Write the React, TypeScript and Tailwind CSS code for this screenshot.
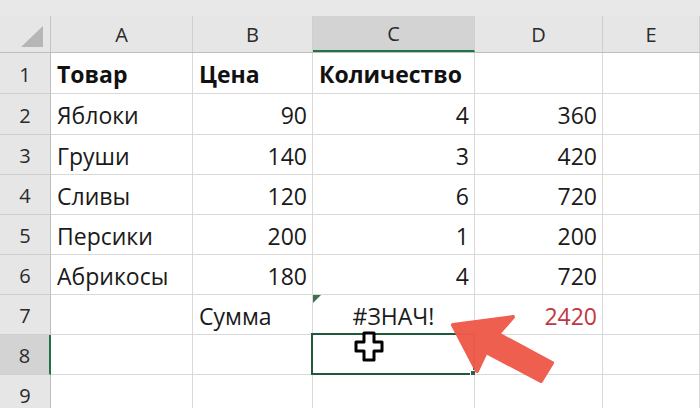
import React from "react";

const colWidths = ["w-[142px]", "w-[120px]", "w-[162px]", "w-[128px]", "flex-1"];
const colNames = ["A", "B", "C", "D", "E"];

type Cell = { v?: string; align?: "l" | "r" | "c"; bold?: boolean; red?: boolean };

const rows: Cell[][] = [
  [{ v: "Товар", bold: true }, { v: "Цена", bold: true }, { v: "Количество", bold: true }, {}, {}],
  [{ v: "Яблоки" }, { v: "90", align: "r" }, { v: "4", align: "r" }, { v: "360", align: "r" }, {}],
  [{ v: "Груши" }, { v: "140", align: "r" }, { v: "3", align: "r" }, { v: "420", align: "r" }, {}],
  [{ v: "Сливы" }, { v: "120", align: "r" }, { v: "6", align: "r" }, { v: "720", align: "r" }, {}],
  [{ v: "Персики" }, { v: "200", align: "r" }, { v: "1", align: "r" }, { v: "200", align: "r" }, {}],
  [{ v: "Абрикосы" }, { v: "180", align: "r" }, { v: "4", align: "r" }, { v: "720", align: "r" }, {}],
  [{}, { v: "Сумма" }, { v: "#ЗНАЧ!", align: "c" }, { v: "2420", align: "r", red: true }, {}],
  [{}, {}, {}, {}, {}],
  [{}, {}, {}, {}, {}],
];

const rowHeights = ["h-[41px]", "h-[41px]", "h-[40px]", "h-[40px]", "h-[40px]", "h-[40px]", "h-[40px]", "h-[40px]", "h-[40px]"];

function GridCell({ cell, width, row, col }: { cell: Cell; width: string; row: number; col: number }) {
  const align =
    cell.align === "r" ? "justify-end pr-[5px]" : cell.align === "c" ? "justify-center" : "justify-start pl-[6px]";
  const selected = row === 7 && col === 2;
  const errorMark = row === 6 && col === 2;
  return (
    <div
      className={`relative ${width} h-full shrink-0 flex items-center pt-[3px] border-r border-b border-[#d9d9d9] bg-white ${align}`}
    >
      {cell.v && (
        <span
          className={`whitespace-nowrap text-[23px] leading-none ${cell.bold ? "font-bold text-[#111]" : "text-[#1a1a1a]"} ${
            cell.red ? "text-[#bf3840] font-medium" : ""
          }`}
        >
          {cell.v}
        </span>
      )}
      {errorMark && (
        <div className="absolute left-0 top-0 w-0 h-0 border-t-[8px] border-r-[8px] border-t-[#3f6e50] border-r-transparent" />
      )}
      {selected && (
        <div className="absolute -left-[2px] -top-[2px] -right-[1px] -bottom-[1px] border-2 border-[#1f5a3c]">
          <div className="absolute -right-[5px] -bottom-[5px] w-[8px] h-[8px] bg-[#2f6149] border border-white" />
        </div>
      )}
    </div>
  );
}

export default function App() {
  return (
    <div
      className="relative w-[700px] h-[408px] overflow-hidden bg-white"
      style={{ fontFamily: '"Open Sans", "Noto Sans", sans-serif' }}
    >
      <div className="h-[16px] bg-[#e8e8e8]" />

      {/* column headers */}
      <div className="flex h-[37px] bg-[#e6e6e6] border-b border-[#bdbdbd]">
        <div className="relative w-[51px] shrink-0 border-r border-[#c4c4c4]">
          <svg className="absolute left-0 top-0" width="51" height="37" viewBox="0 0 51 37">
            <polygon points="21,31 43,31 43,10" fill="#b6b6b6" />
          </svg>
        </div>
        {colNames.map((c, i) => (
          <div
            key={c}
            className={`${colWidths[i]} shrink-0 flex items-center justify-center pt-[2px] border-r border-[#cfcfcf] text-[20px] text-[#2a2a2a] ${
              c === "C" ? "bg-[#d3d3d3] border-b-2 border-b-[#217346]" : ""
            }`}
          >
            {c}
          </div>
        ))}
      </div>

      {/* body */}
      {rows.map((r, ri) => (
        <div key={ri} className={`flex ${rowHeights[ri]}`}>
          <div
            className={`w-[51px] h-full shrink-0 flex items-center justify-center pt-[3px] border-b border-[#cfcfcf] text-[20px] text-[#2a2a2a] ${
              ri === 7 ? "bg-[#d3d3d3] border-r-2 border-r-[#217346]" : "bg-[#e6e6e6] border-r border-r-[#bdbdbd]"
            }`}
          >
            {ri + 1}
          </div>
          {r.map((cell, ci) => (
            <GridCell key={ci} cell={cell} width={colWidths[ci]} row={ri} col={ci} />
          ))}
        </div>
      ))}

      {/* cursor and arrow overlay */}
      <svg className="absolute left-0 top-0 pointer-events-none" width="700" height="408" viewBox="0 0 700 408">
        <path
          d="M364 333 h10 v9 h8 v9 h-8 v9 h-10 v-9 h-8 v-9 h8 z"
          fill="#ffffff"
          stroke="#000000"
          strokeWidth="3"
          strokeLinejoin="round"
        />
        <polygon
          points="453,325 513,317 498,334 552,363 541,381 486,352 477,371"
          fill="#ef5a4b"
          stroke="#ef5a4b"
          strokeWidth="4"
          strokeLinejoin="round"
          opacity="0.97"
        />
      </svg>
    </div>
  );
}
